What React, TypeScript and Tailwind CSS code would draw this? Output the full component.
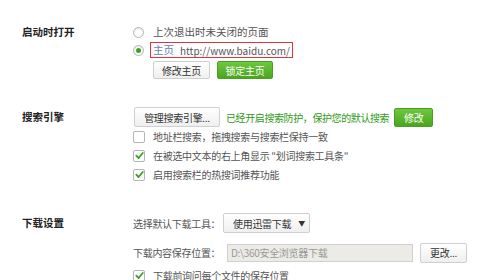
const font = { fontFamily: '"Noto Sans CJK SC", "Microsoft YaHei", sans-serif' };

function Radio({ checked }: { checked?: boolean }) {
  return (
    <span className="flex h-[11px] w-[11px] shrink-0 items-center justify-center rounded-full border border-[#b5b5b5] bg-white shadow-[inset_0_1px_2px_rgba(0,0,0,0.12)]">
      {checked && <span className="h-[5px] w-[5px] rounded-full bg-[#3da324]" />}
    </span>
  );
}

function Check({ checked }: { checked?: boolean }) {
  return (
    <span className="flex h-[12px] w-[12px] shrink-0 items-center justify-center rounded-[2px] border border-[#b5b5b5] bg-white">
      {checked && (
        <svg width="9" height="9" viewBox="0 0 10 10">
          <path d="M1.5 5.2 L4 7.8 L8.6 2.2" fill="none" stroke="#3c9e22" strokeWidth="2" strokeLinecap="round" strokeLinejoin="round" />
        </svg>
      )}
    </span>
  );
}

function GreyBtn({ children, className = "" }: { children: React.ReactNode; className?: string }) {
  return (
    <button className={`flex shrink-0 items-center justify-center rounded-[2px] border border-[#cfcfcf] bg-gradient-to-b from-white to-[#efefef] text-[10px] tracking-[-0.3px] text-[#333] ${className}`}>
      {children}
    </button>
  );
}

function GreenBtn({ children, className = "" }: { children: React.ReactNode; className?: string }) {
  return (
    <button className={`flex shrink-0 items-center justify-center rounded-[2px] border border-[#4a9e22] bg-gradient-to-b from-[#6cc83c] to-[#4aa61f] text-[10px] tracking-[-0.3px] text-white ${className}`}>
      {children}
    </button>
  );
}

function CheckRow({ checked, children }: { checked?: boolean; children: React.ReactNode }) {
  return (
    <div className="flex h-[19px] items-center">
      <Check checked={checked} />
      <span className="ml-[8px] text-[10px] tracking-[-0.3px] text-[#555]">{children}</span>
    </div>
  );
}

export default function App() {
  return (
    <div className="h-[280px] w-[490px] overflow-hidden whitespace-nowrap bg-white" style={font}>
      <div className="flex flex-col pl-[22px] pt-[23px]">
        {/* 启动时打开 */}
        <section className="flex">
          <div className="flex h-[18px] w-[111px] shrink-0 items-center text-[10.5px] font-bold text-[#222]">启动时打开</div>
          <div className="flex flex-col">
            <div className="flex h-[18px] items-center">
              <Radio />
              <span className="ml-[9px] text-[10.5px] text-[#555]">上次退出时未关闭的页面</span>
            </div>
            <div className="flex h-[18px] items-center">
              <Radio checked />
              <span className="ml-[6px] flex h-[16px] w-[143px] items-center border-[1.5px] border-[#e2333d] pl-[2px] text-[10.5px] text-[#555]">
                <span className="text-[#6581a8]">主页</span>
                <span className="ml-[6px] text-[10px]">http://www.baidu.com/</span>
              </span>
            </div>
            <div className="ml-[20px] mt-[2px] flex gap-[7px]">
              <GreyBtn className="h-[18px] w-[57px]">修改主页</GreyBtn>
              <GreenBtn className="h-[18px] w-[56px]">锁定主页</GreenBtn>
            </div>
          </div>
        </section>

        {/* 搜索引擎 */}
        <section className="mt-[28px] flex">
          <div className="flex h-[20px] w-[111px] shrink-0 items-center text-[10.5px] font-bold text-[#222]">搜索引擎</div>
          <div className="flex flex-col">
            <div className="flex h-[20px] items-center">
              <GreyBtn className="ml-[1px] h-[20px] w-[86px]">管理搜索引擎...</GreyBtn>
              <span className="ml-[6px] text-[10px] tracking-[-0.4px] text-[#2f9a17]">已经开启搜索防护，保护您的默认搜索</span>
              <GreenBtn className="ml-[5px] h-[19px] w-[39px]">修改</GreenBtn>
            </div>
            <CheckRow>地址栏搜索，拖拽搜索与搜索栏保持一致</CheckRow>
            <CheckRow checked>在被选中文本的右上角显示 "划词搜索工具条"</CheckRow>
            <CheckRow checked>启用搜索栏的热搜词推荐功能</CheckRow>
          </div>
        </section>

        {/* 下载设置 */}
        <section className="mt-[29px] flex">
          <div className="flex h-[20px] w-[111px] shrink-0 items-center text-[10.5px] font-bold text-[#222]">下载设置</div>
          <div className="flex flex-col">
            <div className="flex h-[20px] items-center">
              <span className="w-[90px] shrink-0 text-[10px] tracking-[-0.3px] text-[#555]">选择默认下载工具：</span>
              <GreyBtn className="h-[20px] w-[87px] justify-start pl-[9px]">
                使用迅雷下载
                <span className="ml-[7px] text-[7px] text-[#333]">▼</span>
              </GreyBtn>
            </div>
            <div className="mt-[10px] flex h-[19px] items-center">
              <span className="w-[94px] shrink-0 text-[10px] tracking-[-0.3px] text-[#555]">下载内容保存位置：</span>
              <div className="flex h-[18px] w-[186px] shrink-0 items-center border border-[#d0d0d0] bg-[#ecebe6] pl-[3px] text-[10px] tracking-[-0.3px] text-[#999]">
                D:\360安全浏览器下载
              </div>
              <GreyBtn className="ml-[7px] h-[20px] w-[47px]">更改...</GreyBtn>
            </div>
            <div className="mt-[4px] flex h-[19px] items-center">
              <Check checked />
              <span className="ml-[8px] text-[10px] tracking-[-0.3px] text-[#555]">下载前询问每个文件的保存位置</span>
            </div>
          </div>
        </section>
      </div>
    </div>
  );
}
